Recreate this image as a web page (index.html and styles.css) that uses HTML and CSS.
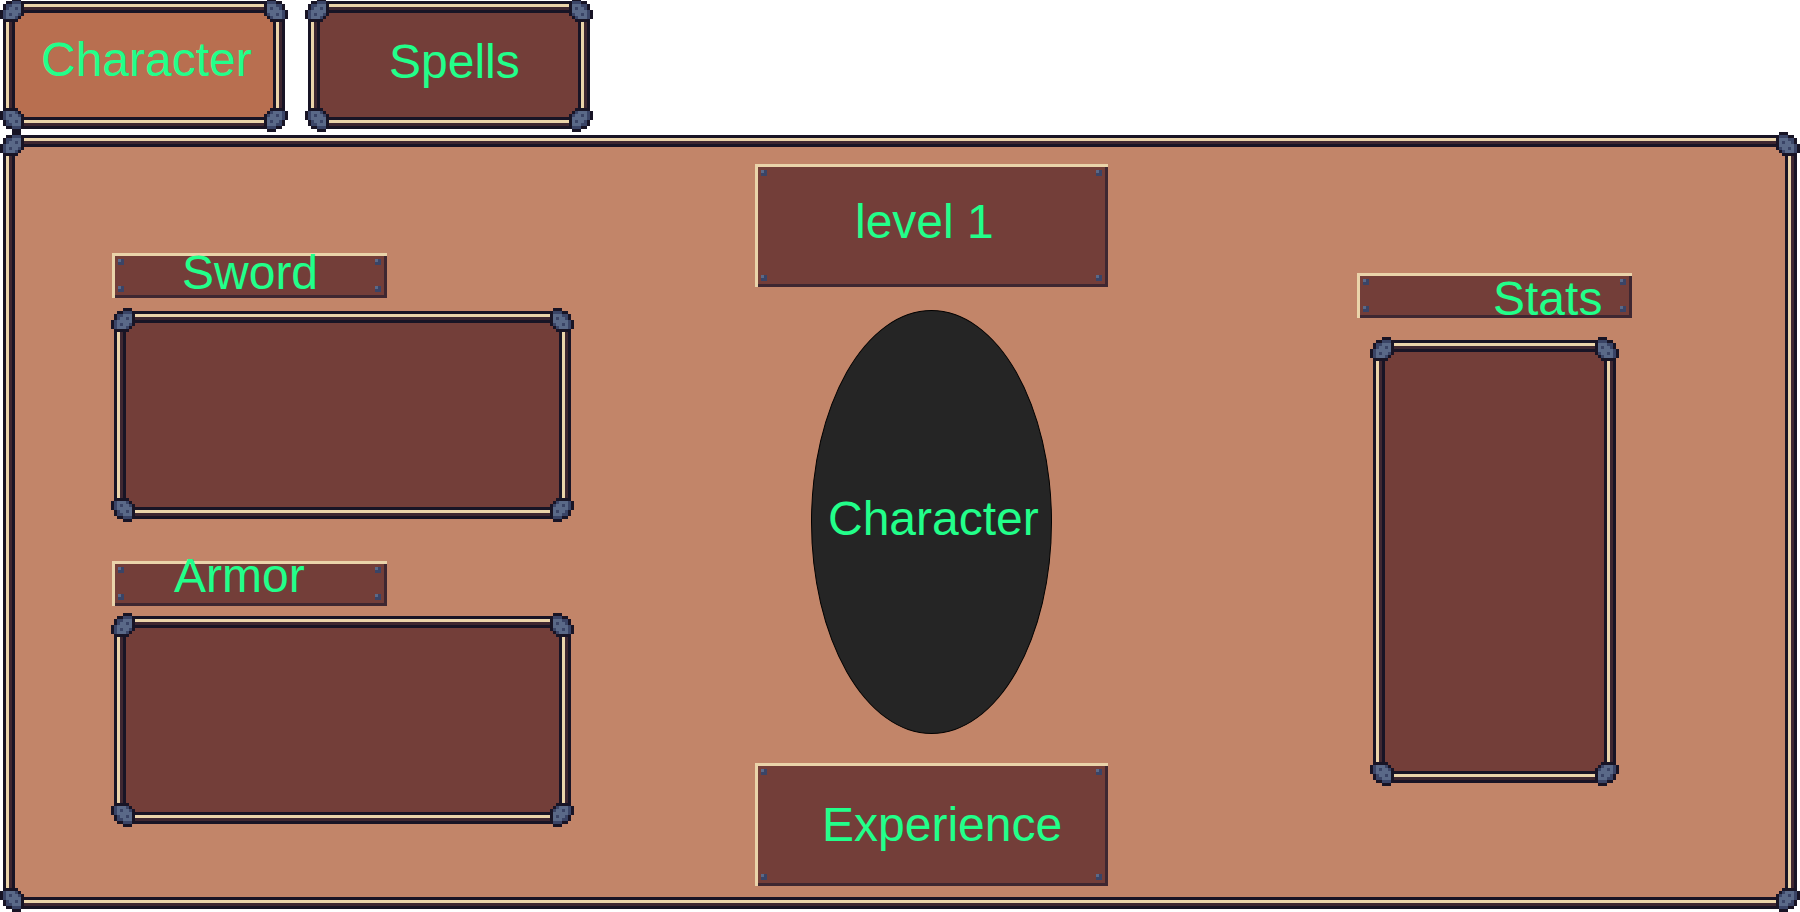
FILE: index.html
```html
<!DOCTYPE html>
<html lang="en">
<head>
<meta charset="utf-8">
<meta name="viewport" content="width=device-width, initial-scale=1">
<title>Character</title>
<link rel="stylesheet" href="styles.css">
</head>
<body>
<nav class="tabs" role="tablist">
  <button class="frame tab tab-character" type="button" role="tab" aria-selected="true" aria-controls="sheet">Character</button>
  <button class="frame tab tab-spells" type="button" role="tab" aria-selected="false">Spells</button>
</nav>
<main class="frame sheet" id="sheet" role="tabpanel">
  <section class="column gear">
    <h2 class="plate plate-sword">Sword</h2>
    <div class="frame slot"></div>
    <h2 class="plate plate-armor">Armor</h2>
    <div class="frame slot"></div>
  </section>
  <section class="column hero">
    <p class="plate plate-large plate-level">level 1</p>
    <div class="portrait">Character</div>
    <p class="plate plate-large plate-experience">Experience</p>
  </section>
  <section class="column stats">
    <h2 class="plate plate-stats">Stats</h2>
    <div class="frame slot slot-stats"></div>
  </section>
</main>
</body>
</html>
```

FILE: styles.css
```css
* {
  box-sizing: border-box;
}

body {
  margin: 0;
  min-height: 100vh;
  display: flex;
  flex-direction: column;
  overflow-x: hidden;
  background: #fff;
  color: #22ff8a;
  font: 400 48px/48px "Liberation Sans", Arial, sans-serif;
}

h2,
p {
  margin: 0;
  font: inherit;
}

/* Pixel-art rail with riveted corners, drawn on a 17 x 17 grid of 3px cells */
.frame {
  --fill: #733e39;
  border: 0 solid transparent;
  border-image: url("data:image/svg+xml,%3Csvg xmlns='http://www.w3.org/2000/svg' width='51' height='51' viewBox='0 0 17 17' shape-rendering='crispEdges'%3E%3Cdefs%3E%3Cg id='c'%3E%3Cpath fill='%23181425' d='M4 0h3v1h1v5h-1v1h-1v1H1V7H0V4h1V2h1V1h2z'/%3E%3Cpath fill='%233a4466' d='M4 1h3v5h-1v1H1V4h1V2h2z'/%3E%3Cpath fill='%235a6988' d='M4 2h3v3h-1v1h-1v1H2V4h1V3h1z'/%3E%3Cpath fill='%233a4466' d='M5 3h1v1h-1zM3 5h1v1h-1z'/%3E%3C/g%3E%3C/defs%3E%3Cpath fill='%23181425' d='M8 1h1v4h-1zM8 12h1v4h-1zM1 8h4v1h-4zM12 8h4v1h-4z'/%3E%3Cpath fill='%23ead4aa' d='M8 2h1v1h-1zM8 13h1v1h-1zM2 8h1v1h-1zM13 8h1v1h-1z'/%3E%3Cpath fill='%233e2731' d='M8 3h1v1h-1zM8 14h1v1h-1zM3 8h1v1h-1zM14 8h1v1h-1z'/%3E%3Cuse href='%23c'/%3E%3Cuse href='%23c' transform='matrix(-1 0 0 1 17 0)'/%3E%3Cuse href='%23c' transform='matrix(1 0 0 -1 0 17)'/%3E%3Cuse href='%23c' transform='matrix(-1 0 0 -1 17 17)'/%3E%3C/svg%3E") 24 / 24px stretch;
  background: linear-gradient(var(--fill), var(--fill)) center / calc(100% - 12px) calc(100% - 12px) no-repeat;
}

.tabs {
  display: flex;
  gap: 17px;
  margin-top: -2px;
}

.tab {
  width: 288px;
  height: 134px;
  color: inherit;
  font: inherit;
  text-align: left;
  cursor: pointer;
}

.tab[aria-selected="true"] {
  --fill: #b86f50;
}

.tab-character {
  padding: 0 0 10px 41px;
}

.tab-spells {
  padding: 0 0 6px 84px;
}

.sheet {
  --fill: #c28569;
  flex: 1;
  display: grid;
  grid-template-columns: 644fr 602fr 275fr;
  padding: 0 168px 24px 111px;
}

.column {
  display: flex;
  flex-direction: column;
  align-items: flex-start;
}

.gear {
  padding-top: 121px;
}

.hero {
  padding-top: 32px;
}

.stats {
  padding-top: 141px;
}

/* Bevelled name plate with a stud in each corner */
.plate {
  width: 275px;
  height: 45px;
  line-height: 30px;
  border: 0 solid transparent;
  border-image: url("data:image/svg+xml,%3Csvg xmlns='http://www.w3.org/2000/svg' width='39' height='39' viewBox='0 0 13 13' shape-rendering='crispEdges'%3E%3Cdefs%3E%3Cg id='s'%3E%3Cpath fill='%233a4466' d='M0 0h2v2H0z'/%3E%3Cpath fill='%235a6988' d='M0 0h1v1H0z'/%3E%3C/g%3E%3C/defs%3E%3Cpath fill='%23733e39' d='M0 0h13v13H0z'/%3E%3Cpath fill='%233e2731' d='M12 1h1v12H1v-1h11z'/%3E%3Cpath fill='%23ead4aa' d='M0 0h13v1H1v12H0z'/%3E%3Cuse href='%23s' x='2' y='2'/%3E%3Cuse href='%23s' x='9' y='2'/%3E%3Cuse href='%23s' x='2' y='9'/%3E%3Cuse href='%23s' x='9' y='9'/%3E%3C/svg%3E") 15 fill / 15px stretch;
}

.gear .plate {
  margin-left: 1px;
}

.plate-sword {
  margin-bottom: 10px;
  padding: 5px 0 0 70px;
}

.plate-armor {
  margin: 39px 0 7px;
  padding-left: 62px;
}

.plate-stats {
  margin-bottom: 19px;
  padding: 11px 0 0 136px;
}

.plate-large {
  width: 353px;
  height: 123px;
  line-height: 48px;
}

.plate-level {
  padding: 34px 0 0 100px;
}

.plate-experience {
  padding: 38px 0 0 67px;
}

.slot {
  width: 463px;
  height: 214px;
}

.slot-stats {
  width: 249px;
  height: 449px;
  margin-left: 13px;
}

.portrait {
  width: 241px;
  height: 424px;
  margin: 23px 56px 29px;
  padding: 184px 0 0 16px;
  border: 1px solid #000;
  border-radius: 50%;
  background: #252525;
}
```
